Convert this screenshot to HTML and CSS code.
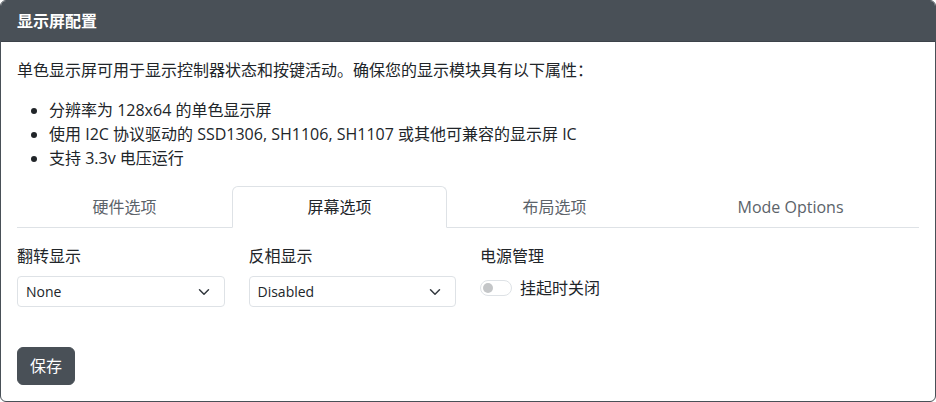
FILE: index.html
```html
<!DOCTYPE html>
<html lang="zh-CN">
<head>
<meta charset="utf-8">
<title>显示屏配置</title>
<link rel="stylesheet" href="styles.css">
</head>
<body>
<div class="card">
  <div class="card-header">显示屏配置</div>
  <div class="card-body">
    <p class="intro">单色显示屏可用于显示控制器状态和按键活动。确保您的显示模块具有以下属性：</p>
    <ul class="props">
      <li>分辨率为 128x64 的单色显示屏</li>
      <li>使用 I2C 协议驱动的 SSD1306, SH1106, SH1107 或其他可兼容的显示屏 IC</li>
      <li>支持 3.3v 电压运行</li>
    </ul>
    <div class="tabs">
      <div class="tab">硬件选项</div>
      <div class="tab active">屏幕选项</div>
      <div class="tab">布局选项</div>
      <div class="tab">Mode Options</div>
    </div>
    <div class="tab-content">
      <div class="field">
        <label class="field-label">翻转显示</label>
        <div class="select"><span>None</span>
          <svg class="chev" viewBox="0 0 16 16" width="16" height="12"><path d="M2 5l6 6 6-6" fill="none" stroke="#343a40" stroke-width="2" stroke-linecap="round" stroke-linejoin="round"/></svg>
        </div>
      </div>
      <div class="field">
        <label class="field-label">反相显示</label>
        <div class="select"><span>Disabled</span>
          <svg class="chev" viewBox="0 0 16 16" width="16" height="12"><path d="M2 5l6 6 6-6" fill="none" stroke="#343a40" stroke-width="2" stroke-linecap="round" stroke-linejoin="round"/></svg>
        </div>
      </div>
      <div class="field">
        <label class="field-label">电源管理</label>
        <div class="switch-row">
          <span class="switch"><span class="knob"></span></span>
          <span class="switch-label">挂起时关闭</span>
        </div>
      </div>
    </div>
    <button class="btn">保存</button>
  </div>
</div>
</body>
</html>
```

FILE: styles.css
```css
* { box-sizing: border-box; }
html, body { margin: 0; padding: 0; background: #fff; }
body {
  font-family: "Open Sans", "Noto Sans CJK SC", sans-serif;
  font-size: 16px;
  line-height: 24px;
  color: #212529;
}
.card {
  width: 936px;
  height: 402px;
  border: 1px solid #495057;
  border-radius: 6px;
  overflow: hidden;
  display: flex;
  flex-direction: column;
}
.card-header {
  background: #495057;
  color: #fff;
  font-weight: 700;
  padding: 8px 16px;
  border-bottom: 1px solid #3d434a;
  height: 41px;
}
.card-body {
  padding: 16px;
  flex: 1;
  display: flex;
  flex-direction: column;
  align-items: flex-start;
}
.intro { margin: 0 0 16px; }
.props { margin: 0 0 16px; padding-left: 32px; }
.tabs {
  display: flex;
  width: 100%;
  border-bottom: 1px solid #dee2e6;
}
.tab {
  flex: 1 1 auto;
  text-align: center;
  padding: 8px 16px;
  color: #5c636a;
  border: 1px solid transparent;
  border-top-left-radius: 6px;
  border-top-right-radius: 6px;
  margin-bottom: -1px;
}
.tab.active {
  color: #212529;
  background: #fff;
  border-color: #dee2e6 #dee2e6 #fff;
}
.tab-content {
  width: 100%;
  display: grid;
  grid-template-columns: repeat(4, 1fr);
  column-gap: 24px;
  padding-top: 16px;
}
.field-label { display: block; margin-bottom: 8px; }
.select {
  height: 31px;
  border: 1px solid #dee2e6;
  border-radius: 4px;
  padding: 0 12px 0 8px;
  display: flex;
  align-items: center;
  justify-content: space-between;
  font-size: 14px;
}
.chev { display: block; }
.switch-row {
  display: flex;
  align-items: center;
  gap: 8px;
  height: 24px;
  margin-top: 1px;
}
.switch {
  width: 32px;
  height: 16px;
  border: 1px solid #dee2e6;
  border-radius: 8px;
  display: flex;
  align-items: center;
  padding-left: 2px;
}
.knob {
  width: 10px;
  height: 10px;
  border-radius: 50%;
  background: #c4c6c8;
}
.btn {
  margin-top: 40px;
  font: inherit;
  color: #fff;
  background: #495057;
  border: 1px solid #495057;
  border-radius: 6px;
  padding: 6px 12px;
  line-height: 24px;
}
```
